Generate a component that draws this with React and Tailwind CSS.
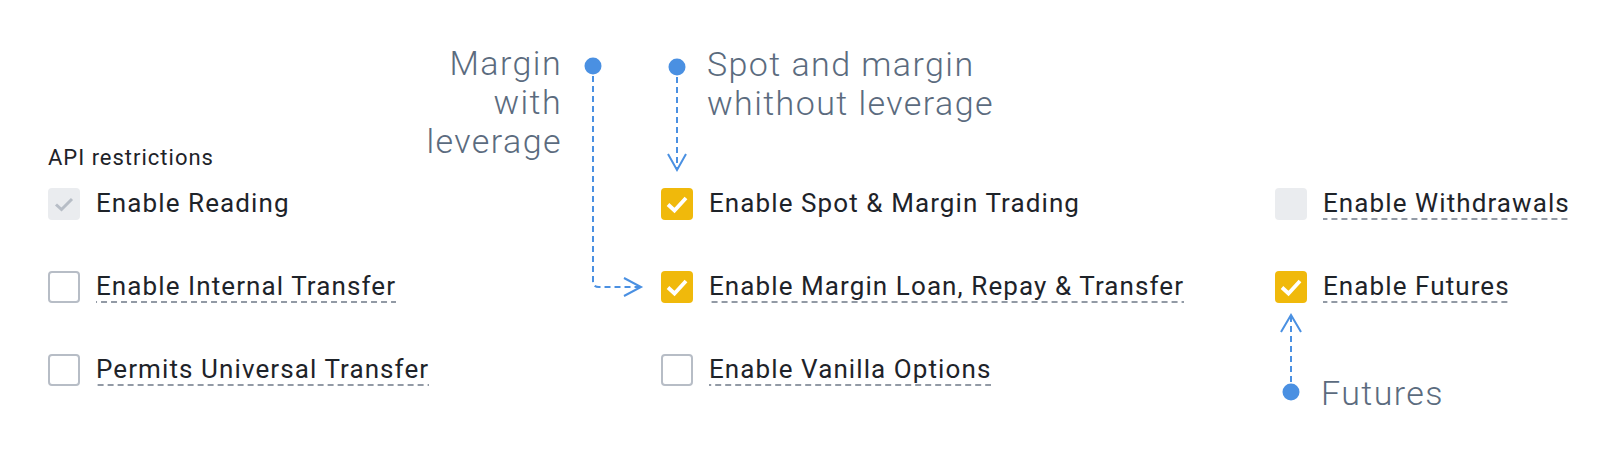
import React from 'react'

const BLUE = '#4a90e2'

function Box({ state }) {
  if (state === 'on') {
    return (
      <span className="flex h-8 w-8 shrink-0 items-center justify-center rounded-[4px] bg-[#f0b90b]">
        <svg width="32" height="32" viewBox="0 0 32 32">
          <path d="M7 16.5 L13.5 22.5 L25 10" fill="none" stroke="#fff" strokeWidth="3.8" />
        </svg>
      </span>
    )
  }
  if (state === 'locked-on') {
    return (
      <span className="flex h-8 w-8 shrink-0 items-center justify-center rounded-[4px] bg-[#eaecef]">
        <svg width="32" height="32" viewBox="0 0 32 32">
          <path d="M8 16.5 L13.5 21.5 L24 11" fill="none" stroke="#b7bdc6" strokeWidth="3" />
        </svg>
      </span>
    )
  }
  if (state === 'locked') {
    return <span className="h-8 w-8 shrink-0 rounded-[4px] bg-[#eaecef]" />
  }
  return <span className="h-8 w-8 shrink-0 rounded-[4px] border-2 border-[#b7bdc6] bg-white" />
}

function Option({ label, state, tip }) {
  return (
    <div className="flex items-start gap-4">
      <Box state={state} />
      <span
        className={
          'block text-[26px] leading-[30px] tracking-[0.042em] text-[#1e2329] whitespace-nowrap pb-[2px] ' +
          (tip
            ? 'bg-[linear-gradient(to_right,#929aa5_60%,transparent_60%)] bg-[length:10px_2px] bg-repeat-x bg-bottom'
            : '')
        }
      >
        {label}
      </span>
    </div>
  )
}

const options = [
  { label: 'Enable Reading', state: 'locked-on' },
  { label: 'Enable Spot & Margin Trading', state: 'on' },
  { label: 'Enable Withdrawals', state: 'locked', tip: true },
  { label: 'Enable Internal Transfer', state: 'off', tip: true },
  { label: 'Enable Margin Loan, Repay & Transfer', state: 'on', tip: true },
  { label: 'Enable Futures', state: 'on', tip: true },
  { label: 'Permits Universal Transfer', state: 'off', tip: true },
  { label: 'Enable Vanilla Options', state: 'off', tip: true },
]

export default function App() {
  return (
    <div className="relative h-[450px] w-[1616px] overflow-hidden bg-white font-['Roboto','Liberation_Sans',sans-serif]">
      <div className="px-[48px] pt-[145px]">
        <div className="text-[22px] leading-[26px] tracking-[0.045em] text-[#1e2329]">API restrictions</div>
        <div className="mt-[17px] grid grid-cols-[613px_614px_1fr] gap-y-[51px]">
          {options.map((o) => (
            <Option key={o.label} {...o} />
          ))}
        </div>
      </div>

      {/* callouts */}
      <svg className="pointer-events-none absolute inset-0" width="1616" height="450">
        <g fill={BLUE}>
          <circle cx="593" cy="66" r="8.5" />
          <circle cx="677" cy="67" r="8.5" />
          <circle cx="1291" cy="392" r="8.5" />
        </g>
        <g fill="none" stroke={BLUE} strokeWidth="2">
          <path d="M593 76 V281 Q593 287 599 287 H639" strokeDasharray="6 4" />
          <path d="M624 278 L641 287 L624 296" />
          <path d="M677 77 V168" strokeDasharray="6 4" />
          <path d="M668 154 L677 170 L686 154" />
          <path d="M1291 382 V317" strokeDasharray="6 4" />
          <path d="M1281 332 L1291 315 L1301 332" />
        </g>
      </svg>
      <div className="absolute right-[1054px] top-[44px] text-right text-[34px] font-light leading-[39px] tracking-[0.042em] text-[#5b6b7e]">
        Margin
        <br />
        with
        <br />
        leverage
      </div>
      <div className="absolute left-[707px] top-[45px] whitespace-nowrap text-[34px] font-light leading-[39px] tracking-[0.042em] text-[#5b6b7e]">
        Spot and margin
        <br />
        whithout leverage
      </div>
      <div className="absolute left-[1321px] top-[373px] text-[34px] font-light leading-[40px] tracking-[0.042em] text-[#5b6b7e]">
        Futures
      </div>
    </div>
  )
}
